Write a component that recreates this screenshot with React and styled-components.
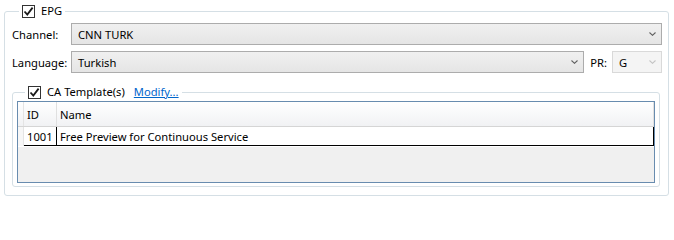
import React from "react";
import styled, { createGlobalStyle } from "styled-components";

const GlobalStyle = createGlobalStyle`
  html, body {
    margin: 0;
    padding: 0;
    background: #ffffff;
  }
  body {
    font-family: "Noto Sans", "Open Sans", sans-serif;
    font-size: 11.2px;
    color: #000000;
  }
`;

const Page = styled.div`
  width: 674px;
  height: 200px;
  padding: 4px 0 0 4px;
  box-sizing: border-box;
`;

const Group = styled.fieldset`
  margin: ${(p) => p.$margin || "0"};
  padding: ${(p) => p.$padding || "0"};
  width: ${(p) => (p.$width ? `${p.$width}px` : "auto")};
  box-sizing: border-box;
  border: 1px solid #d5dfe5;
  border-radius: 3px;
  min-width: 0;
`;

const Legend = styled.legend`
  margin-left: ${(p) => p.$offset || 7}px;
  padding: 0 3px;
  height: 14px;
  display: flex;
  align-items: center;
  gap: 6px;
  line-height: 14px;
`;

const Box = styled.span`
  width: 13px;
  height: 13px;
  box-sizing: border-box;
  border: 1px solid #333333;
  background: #ffffff;
  display: inline-flex;
  align-items: center;
  justify-content: center;
`;

const Link = styled.a`
  color: #0066cc;
  text-decoration: underline;
  margin-left: 3px;
  cursor: pointer;
`;

const Form = styled.div`
  display: grid;
  grid-template-columns: 59px 1fr auto 50px;
  grid-auto-rows: 22px;
  row-gap: 6px;
  align-items: center;
`;

const Label = styled.span`
  white-space: nowrap;
  padding: ${(p) => (p.$pad ? "0 5px 0 6px" : "0")};
`;

const Combo = styled.div`
  grid-column: ${(p) => p.$span || "auto"};
  height: 22px;
  box-sizing: border-box;
  border: 1px solid ${(p) => (p.$disabled ? "#d9d9d9" : "#acacac")};
  background: ${(p) =>
    p.$disabled ? "#f4f4f4" : "linear-gradient(#f0f0f0, #e5e5e5)"};
  display: flex;
  align-items: center;
  justify-content: space-between;
  padding: 0 5px 0 6px;
`;

const Arrow = ({ disabled }) => (
  <svg width="7" height="4" viewBox="0 0 7 4">
    <path
      d="M0.5 0.5 L3.5 3.3 L6.5 0.5"
      fill="none"
      stroke={disabled ? "#c4c4c4" : "#606060"}
      strokeWidth="1.1"
    />
  </svg>
);

const Check = () => (
  <svg width="11" height="11" viewBox="0 0 11 11">
    <path
      d="M1.5 5.5 L4.3 8.6 L9.6 1.6"
      fill="none"
      stroke="#1a1a1a"
      strokeWidth="1.8"
    />
  </svg>
);

const Grid = styled.div`
  height: 82px;
  box-sizing: border-box;
  border: 1px solid #688caf;
  background: #f0f0f0;
  display: flex;
  flex-direction: column;
`;

const Row = styled.div`
  display: grid;
  grid-template-columns: 6px 33px 1fr;
  height: ${(p) => (p.$header ? "24px" : "19px")};
  background: ${(p) =>
    p.$header ? "linear-gradient(#ffffff, #f1f2f4)" : "#ffffff"};
  border-bottom: 1px solid ${(p) => (p.$header ? "#d5d5d5" : "transparent")};
`;

const Cell = styled.div`
  display: flex;
  align-items: center;
  padding-left: 3px;
  white-space: nowrap;
  overflow: hidden;
  border-right: 1px solid
    ${(p) => (p.$header ? "#e0e0e0" : p.$line ? "#000000" : "transparent")};
  border-bottom: ${(p) => (p.$row ? "1px solid #000000" : "none")};
`;

const RowHead = styled.div`
  background: ${(p) => (p.$header ? "transparent" : "#f7f7f7")};
  border-right: 1px solid #e4e4e4;
`;

export default function App() {
  return (
    <Page>
      <GlobalStyle />
      <Group $width={665} $padding="5px 6px 8px 7px">
        <Legend $offset={7}>
          <Box>
            <Check />
          </Box>
          EPG
        </Legend>
        <Form>
          <Label>Channel:</Label>
          <Combo $span="2 / 5">
            CNN TURK
            <Arrow />
          </Combo>
          <Label>Language:</Label>
          <Combo>
            Turkish
            <Arrow />
          </Combo>
          <Label $pad>PR:</Label>
          <Combo $disabled>
            G
            <Arrow disabled />
          </Combo>
        </Form>
        <Group $margin="12px 2px 0 0" $padding="2px 4px 3px 4px">
          <Legend $offset={8}>
            <Box>
              <Check />
            </Box>
            CA Template(s)
            <Link>Modify...</Link>
          </Legend>
          <Grid>
            <Row $header>
              <RowHead $header />
              <Cell $header>ID</Cell>
              <Cell $header>Name</Cell>
            </Row>
            <Row>
              <RowHead />
              <Cell $row $line>1001</Cell>
              <Cell $row $line>Free Preview for Continuous Service</Cell>
            </Row>
          </Grid>
        </Group>
      </Group>
    </Page>
  );
}
